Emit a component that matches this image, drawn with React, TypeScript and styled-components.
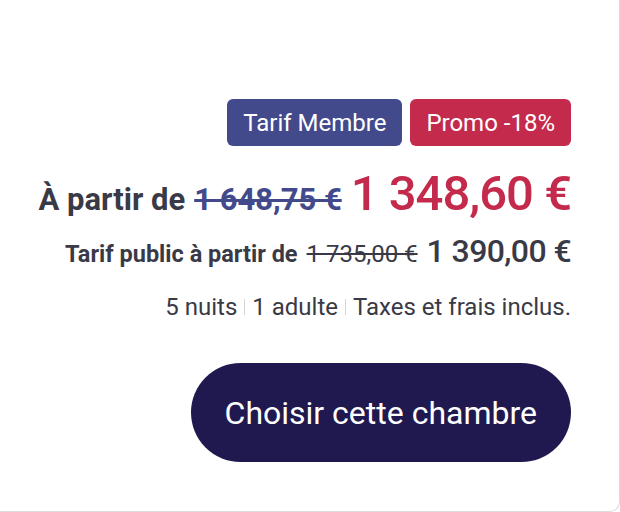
import React from 'react'
import styled, { createGlobalStyle } from 'styled-components'

const GlobalStyle = createGlobalStyle`
  html, body {
    margin: 0;
    padding: 0;
    background: #ffffff;
  }
  body {
    font-family: Roboto, "Liberation Sans", Arial, sans-serif;
    -webkit-font-smoothing: antialiased;
  }
`

const textColor = '#3a3a46'
const memberColor = '#434a8c'
const promoColor = '#c32a4c'
const buttonColor = '#1f1950'

const Card = styled.div`
  box-sizing: border-box;
  width: 620px;
  height: 512px;
  border-right: 1px solid #dcdcdc;
  border-bottom: 1px solid #dcdcdc;
  border-bottom-right-radius: 10px;
  padding: 99px 48px 0 0;
  display: flex;
  flex-direction: column;
  align-items: flex-end;
`

const Badges = styled.div`
  display: flex;
  gap: 8px;
`

const Badge = styled.span<{ $color: string }>`
  display: inline-flex;
  align-items: center;
  height: 47px;
  padding: 0 16px;
  border-radius: 6px;
  background: ${props => props.$color};
  color: #ffffff;
  font-size: 24px;
`

const PriceLine = styled.div`
  margin-top: 19px;
  display: flex;
  align-items: baseline;
  gap: 9px;
  color: ${textColor};
`

const Label = styled.span<{ $size: number }>`
  font-weight: 700;
  font-size: ${props => props.$size}px;
`

const OldPrice = styled.s<{ $size: number; $color: string; $bold?: boolean }>`
  font-size: ${props => props.$size}px;
  font-weight: ${props => props.$bold ? 700 : 400};
  color: ${props => props.$color};
`

const Price = styled.span<{ $size: number; $color: string; $spacing: number }>`
  font-size: ${props => props.$size}px;
  font-weight: 500;
  letter-spacing: ${props => props.$spacing}px;
  color: ${props => props.$color};
`

const PublicLine = styled(PriceLine)`
  margin-top: 10px;
  gap: 9px;
`

const Details = styled.div`
  margin-top: 23px;
  display: flex;
  align-items: center;
  color: ${textColor};
  font-size: 24px;
`

const Sep = styled.span`
  width: 1px;
  height: 16px;
  background: #d4d4d8;
  margin: 0 7px;
`

const Button = styled.button`
  margin-top: 42px;
  height: 99px;
  padding: 0 34px;
  border: none;
  border-radius: 50px;
  background: ${buttonColor};
  color: #ffffff;
  font-family: inherit;
  font-size: 32px;
  cursor: pointer;
`

export default function App() {
  return (
    <>
      <GlobalStyle />
      <Card>
        <Badges>
          <Badge $color={memberColor}>Tarif Membre</Badge>
          <Badge $color={promoColor}>Promo -18%</Badge>
        </Badges>
        <PriceLine>
          <Label $size={31}>À partir de</Label>
          <OldPrice $size={31} $color={memberColor} $bold>1 648,75 €</OldPrice>
          <Price $size={49} $spacing={-1} $color={promoColor}>1 348,60 €</Price>
        </PriceLine>
        <PublicLine>
          <Label $size={23.5}>Tarif public à partir de</Label>
          <OldPrice $size={24} $color={textColor}>1 735,00 €</OldPrice>
          <Price $size={32} $spacing={-0.6} $color={textColor}>1 390,00 €</Price>
        </PublicLine>
        <Details>
          <span>5 nuits</span>
          <Sep />
          <span>1 adulte</span>
          <Sep />
          <span>Taxes et frais inclus.</span>
        </Details>
        <Button>Choisir cette chambre</Button>
      </Card>
    </>
  )
}
